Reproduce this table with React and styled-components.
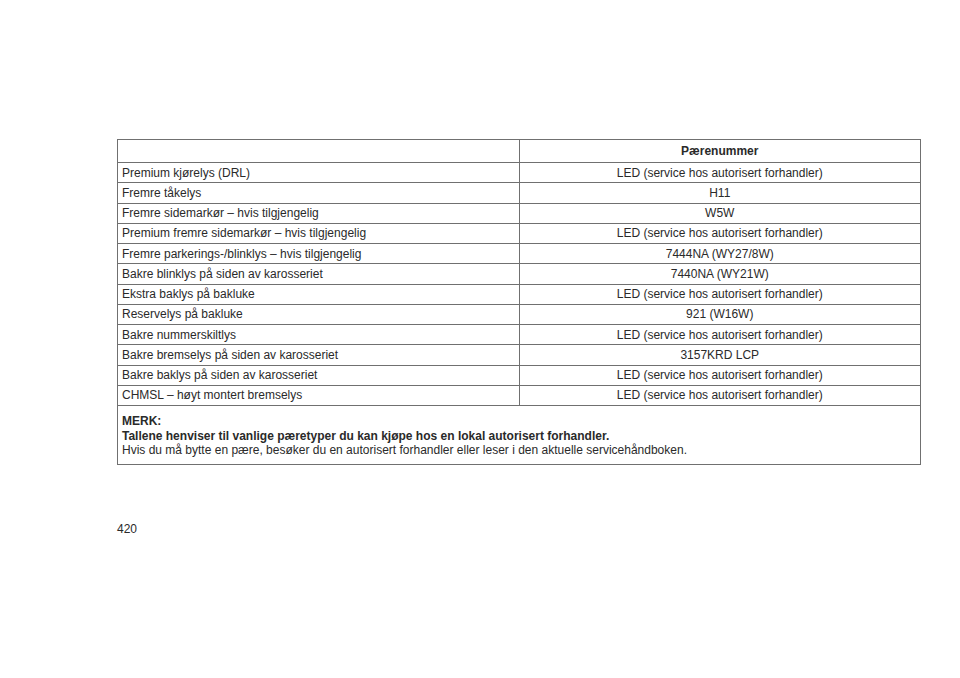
import React from 'react';
import styled, { createGlobalStyle } from 'styled-components';

const GlobalStyle = createGlobalStyle`
  html, body {
    margin: 0;
    padding: 0;
    background: #ffffff;
  }
  body {
    font-family: "Liberation Sans", Arial, Helvetica, sans-serif;
    color: #2a2a2a;
  }
`;

const Page = styled.div`
  width: 960px;
  height: 678px;
  box-sizing: border-box;
  padding: 139px 39px 0 117px;
`;

const Table = styled.table`
  width: 804px;
  border-collapse: collapse;
  table-layout: fixed;
  font-size: 12px;
  line-height: 14px;
`;

const HeadCell = styled.th`
  height: 22px;
  padding: 0 4px;
  border: 1px solid #707070;
  font-weight: bold;
  text-align: center;
  vertical-align: middle;
`;

const Cell = styled.td`
  height: 19.25px;
  padding: 0 4px;
  border: 1px solid #707070;
  text-align: ${props => (props.center ? 'center' : 'left')};
  vertical-align: middle;
  white-space: nowrap;
`;

const NoteCell = styled.td`
  padding: 8px 4px 6px;
  border: 1px solid #707070;
  line-height: 14.5px;
`;

const NoteTitle = styled.div`
  font-weight: bold;
`;

const NoteBold = styled.div`
  font-weight: bold;
`;

const PageNumber = styled.div`
  margin-top: 57px;
  font-size: 12px;
`;

const rows = [
  ['Premium kjørelys (DRL)', 'LED (service hos autorisert forhandler)'],
  ['Fremre tåkelys', 'H11'],
  ['Fremre sidemarkør – hvis tilgjengelig', 'W5W'],
  ['Premium fremre sidemarkør – hvis tilgjengelig', 'LED (service hos autorisert forhandler)'],
  ['Fremre parkerings-/blinklys – hvis tilgjengelig', '7444NA (WY27/8W)'],
  ['Bakre blinklys på siden av karosseriet', '7440NA (WY21W)'],
  ['Ekstra baklys på bakluke', 'LED (service hos autorisert forhandler)'],
  ['Reservelys på bakluke', '921 (W16W)'],
  ['Bakre nummerskiltlys', 'LED (service hos autorisert forhandler)'],
  ['Bakre bremselys på siden av karosseriet', '3157KRD LCP'],
  ['Bakre baklys på siden av karosseriet', 'LED (service hos autorisert forhandler)'],
  ['CHMSL – høyt montert bremselys', 'LED (service hos autorisert forhandler)'],
];

const App = () => (
  <>
    <GlobalStyle />
    <Page>
      <Table>
        <thead>
          <tr>
            <HeadCell />
            <HeadCell>Pærenummer</HeadCell>
          </tr>
        </thead>
        <tbody>
          {rows.map(([name, bulb]) => (
            <tr key={name}>
              <Cell>{name}</Cell>
              <Cell center>{bulb}</Cell>
            </tr>
          ))}
          <tr>
            <NoteCell colSpan={2}>
              <NoteTitle>MERK:</NoteTitle>
              <NoteBold>Tallene henviser til vanlige pæretyper du kan kjøpe hos en lokal autorisert forhandler.</NoteBold>
              <div>Hvis du må bytte en pære, besøker du en autorisert forhandler eller leser i den aktuelle servicehåndboken.</div>
            </NoteCell>
          </tr>
        </tbody>
      </Table>
      <PageNumber>420</PageNumber>
    </Page>
  </>
);

export default App;
